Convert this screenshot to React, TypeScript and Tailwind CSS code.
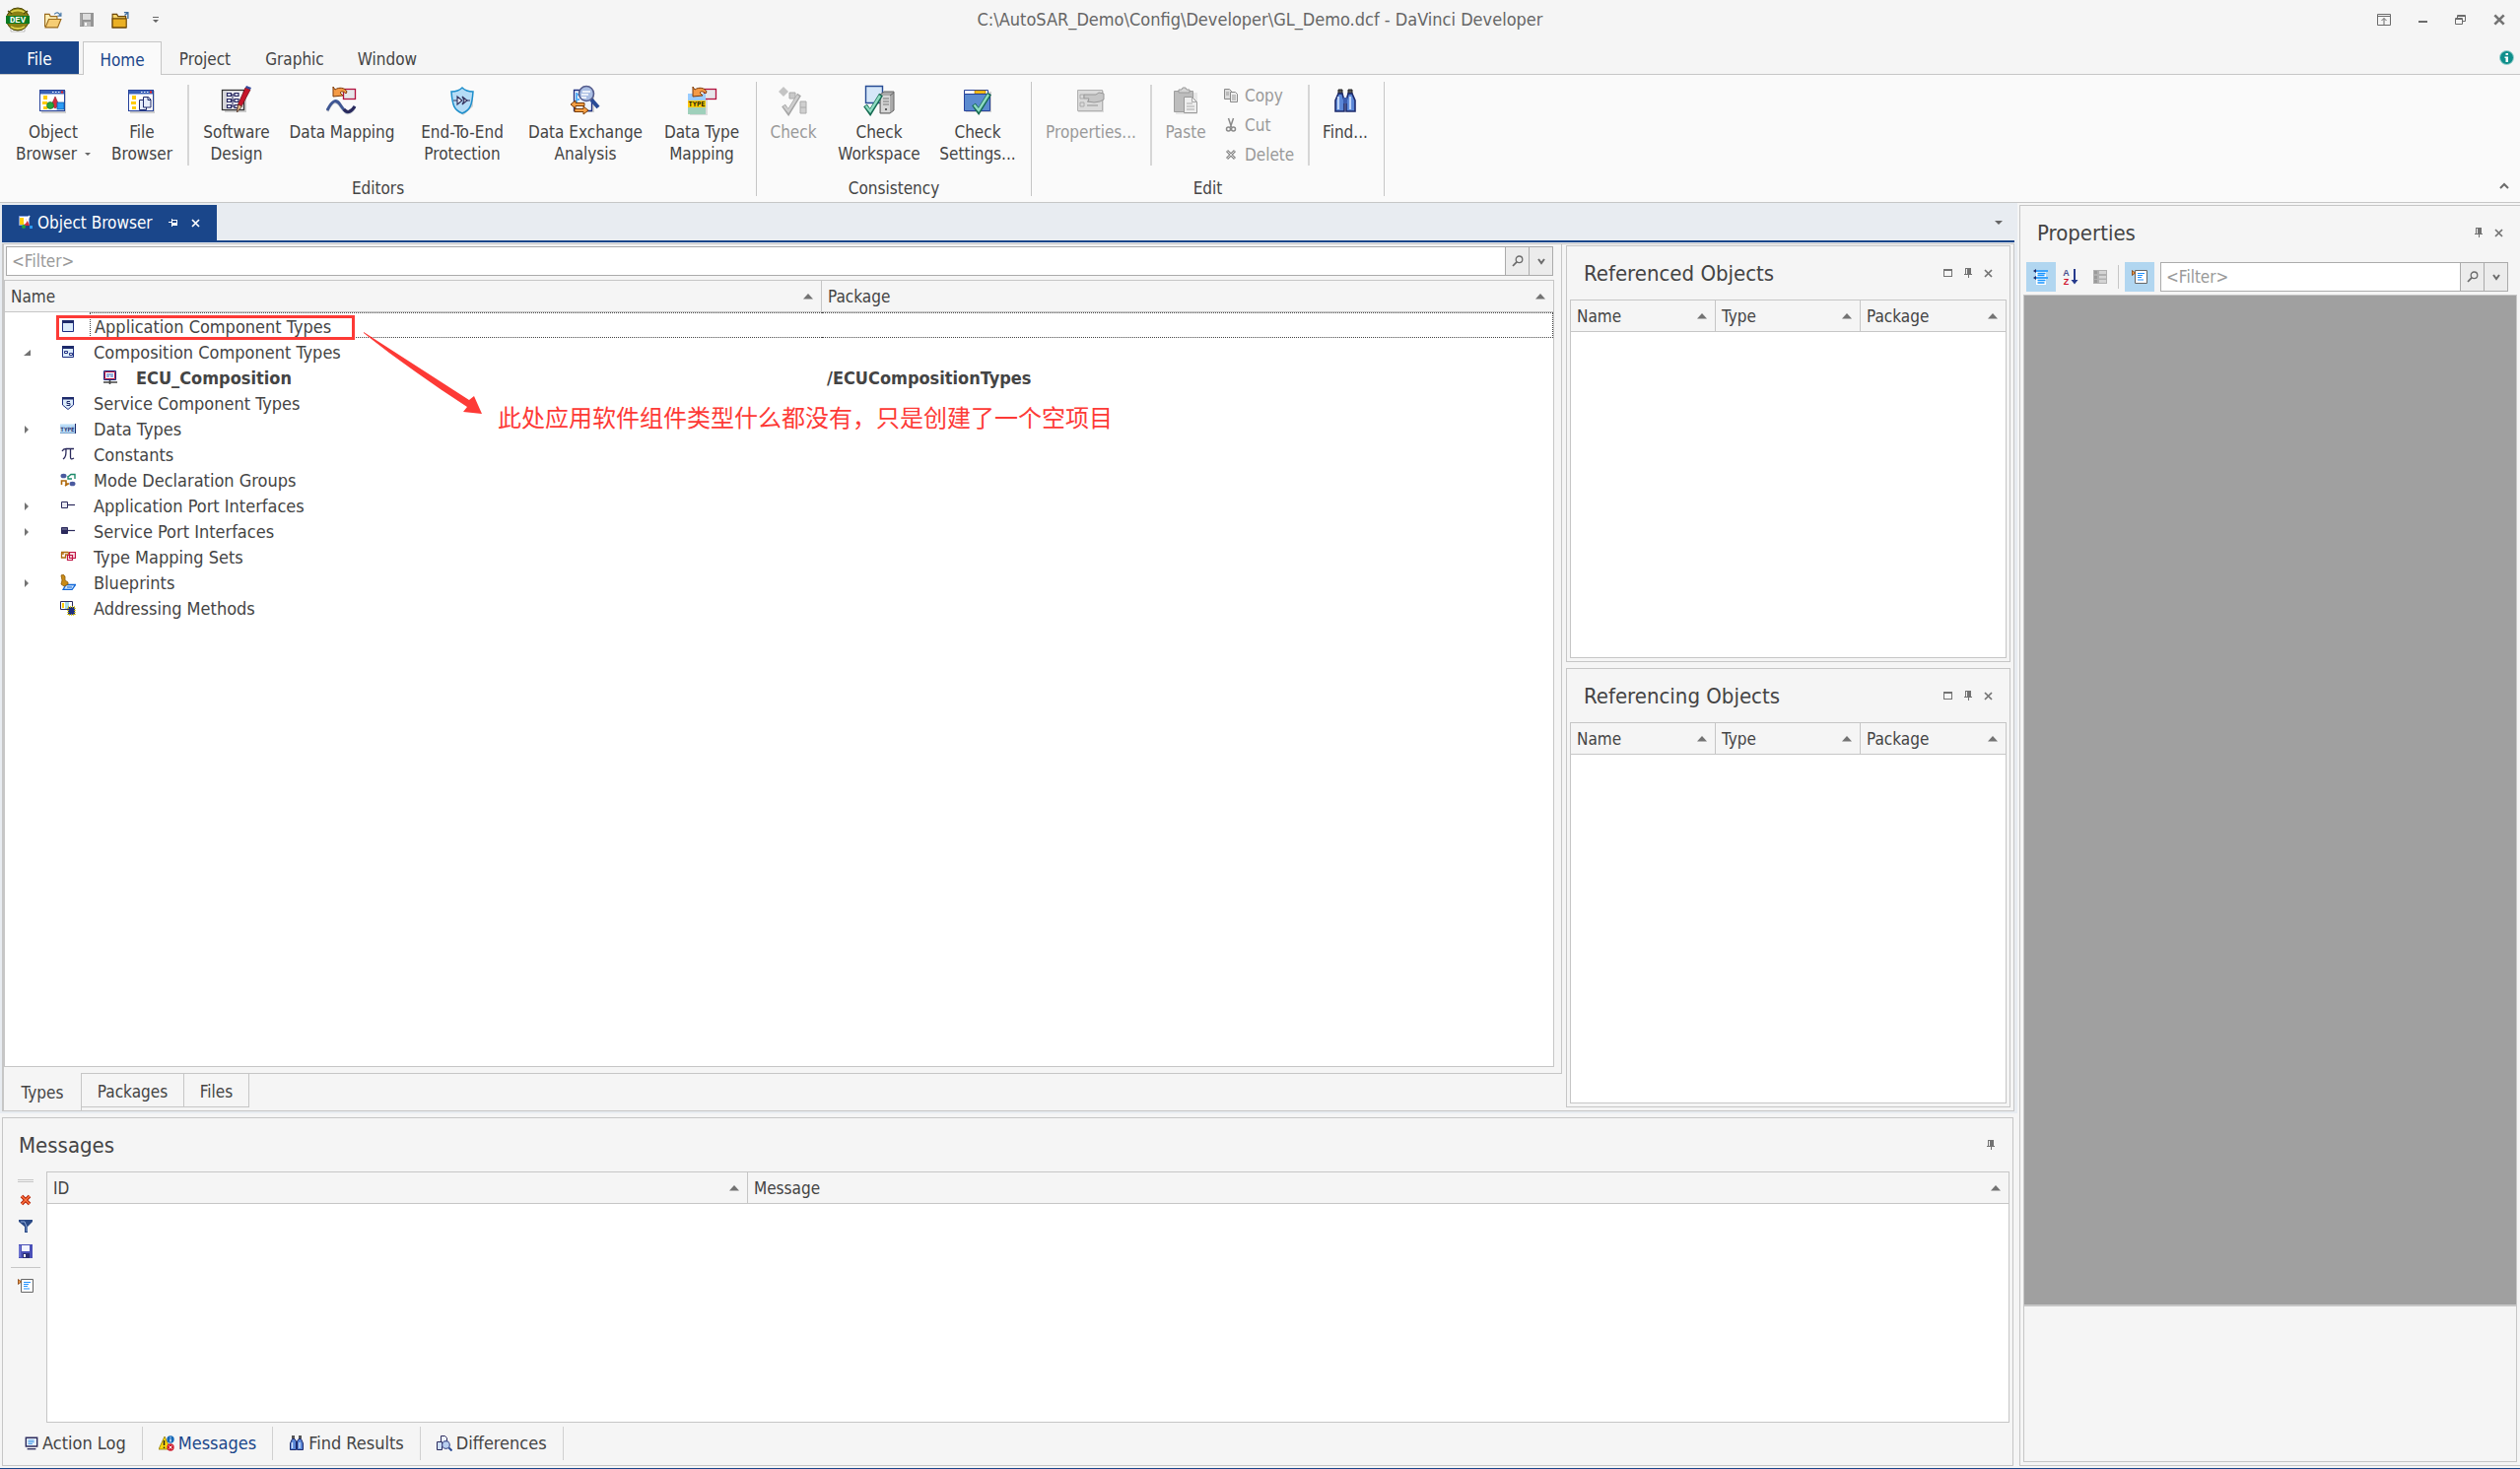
import { useState } from 'react';
import type { ReactNode } from 'react';
import clsx from 'clsx';

/* ---------- small glyphs ---------- */

function SortArrow() {
  return (
    <svg width="10" height="6" viewBox="0 0 10 6" className="shrink-0" aria-hidden="true">
      <path d="M5 0 10 5.5H0z" fill="#737373" />
    </svg>
  );
}

function CaretDown({ size = 8 }: { size?: number }) {
  return (
    <svg width={size} height={size / 2} viewBox="0 0 8 4" aria-hidden="true">
      <path d="M0 0h8L4 4z" fill="#666" />
    </svg>
  );
}

function PinIcon() {
  return (
    <svg width="8" height="10" viewBox="0 0 8 10" aria-hidden="true">
      <path d="M1 0h6v6h1v1H5v3H4V7H0V6h1zM2 1v5h1V1z" fill="#737373" fillRule="evenodd" />
    </svg>
  );
}

function CloseIcon({ color = '#737373', size = 9, weight = 1.7 }: { color?: string; size?: number; weight?: number }) {
  return (
    <svg width={size} height={size} viewBox="0 0 9 9" aria-hidden="true">
      <path d="M1 1l7 7M8 1L1 8" stroke={color} strokeWidth={weight} fill="none" />
    </svg>
  );
}

function MaximizeIcon() {
  return (
    <svg width="9" height="8" viewBox="0 0 9 8" aria-hidden="true">
      <path d="M0 0h9v8H0zM1 2v5h7V2z" fill="#737373" fillRule="evenodd" />
    </svg>
  );
}

function SearchIcon() {
  return (
    <svg width="12" height="12" viewBox="0 0 12 12" aria-hidden="true">
      <circle cx="7.5" cy="4.3" r="3.3" fill="none" stroke="#6b6b6b" strokeWidth="1.3" />
      <path d="M5 6.8L1 11" stroke="#6b6b6b" strokeWidth="1.8" />
    </svg>
  );
}

function ChevronIcon({ up = false }: { up?: boolean }) {
  return (
    <svg width="10" height="7" viewBox="0 0 10 7" aria-hidden="true">
      <path d={up ? 'M1 6l4-4 4 4' : 'M2 1l3 4 3-4'} fill="none" stroke="#6b6b6b" strokeWidth="2" />
    </svg>
  );
}

/* ---------- ribbon icons ---------- */

function Icon32({ children }: { children: ReactNode }) {
  return (
    <svg width="32" height="32" viewBox="0 0 32 32" className="shrink-0" aria-hidden="true">
      {children}
    </svg>
  );
}

function WindowFrame() {
  return (
    <>
      <rect x="4" y="6" width="25" height="23" fill="#999" opacity=".45" />
      <rect x="2.5" y="5.5" width="25" height="21" fill="#fff" stroke="#27429a" />
      <rect x="3" y="6" width="24" height="3.5" fill="#3b62b8" />
      <path d="M15 7.5h1.5M18 7.5h1.5M21 7.5h1.5" stroke="#fff" strokeWidth="1.2" />
      <path d="M24 7.5h2" stroke="#e22" strokeWidth="2" />
      <path d="M6 11h4v4H6zM5 17h5v3H5zM6 22h4v3H6z" fill="#fc0" />
    </>
  );
}

function ObjectBrowserIcon() {
  return (
    <Icon32>
      <WindowFrame />
      <path d="M18 12l4 9-4 3-4-3z" fill="#d22c3e" stroke="#8c1020" strokeWidth=".6" />
      <circle cx="13" cy="21" r="3.5" fill="#25a53a" stroke="#146324" strokeWidth=".6" />
      <rect x="20" y="18" width="7" height="7" fill="#2b9bf5" stroke="#0d5cab" strokeWidth=".8" />
    </Icon32>
  );
}

function FileBrowserIcon() {
  return (
    <Icon32>
      <WindowFrame />
      <path d="M13.5 15.5h5l2 2v8h-7z" fill="#e5ecfa" stroke="#1f2b6b" />
      <path d="M17.5 12.5h5l2.5 2.5v8h-7.5z" fill="#e5ecfa" stroke="#1f2b6b" />
      <path d="M22 12.5v3h3" fill="none" stroke="#1f2b6b" />
    </Icon32>
  );
}

function SoftwareDesignIcon() {
  return (
    <Icon32>
      <path d="M4 7h22v21H4z" fill="#999" opacity=".45" />
      <rect x="1.5" y="5.5" width="22" height="20" fill="#f3f3f6" stroke="#333" strokeWidth="1.3" />
      <rect x="3" y="7" width="4" height="17" fill="#d6d6da" />
      <path
        d="M6.5 8.5h4v3h-4zM6.5 14.5h4v3h-4zM6.5 20.5h4v3h-4zM14 8.5h4v3h-4zM14 14.5h4v3h-4zM14 20.5h4v3h-4z"
        fill="#dce0f5"
        stroke="#26265e"
        strokeWidth="1.2"
      />
      <path d="M10 10h4M10 16h4M10 22h4M12 10v12" stroke="#26265e" />
      <path d="M25 3l5 2-9 17-4 4 .5-6z" fill="#c7152b" stroke="#6e0d18" strokeWidth=".8" />
      <path d="M17.5 20l4 2-5 6z" fill="#e9c08c" stroke="#4b2f25" strokeWidth=".8" />
      <path d="M25 3l1-2 5 2-1 2z" fill="#35489b" />
    </Icon32>
  );
}

function OrangeArrow() {
  return (
    <path
      d="M7 2l2 3c4-3 10-2 12 2l-1 2c-2-2-4-3-6-1l3 3-10 1z"
      fill="#f49a45"
      stroke="#7c3b0a"
      strokeWidth="1"
    />
  );
}

function DataMappingIcon() {
  return (
    <Icon32>
      <rect x="17.5" y="4.5" width="12" height="10" fill="#e6e6ea" stroke="#b3123f" strokeWidth="1.3" />
      <OrangeArrow />
      <path d="M1 27C6 17 10 15 14 21s8 13 15 2" fill="none" stroke="#999" opacity=".4" strokeWidth="3" />
      <path d="M1 26C6 16 10 14 14 20s8 13 15 2" fill="none" stroke="#3f5793" strokeWidth="3" />
      <path d="M18 25c3 4 7 3 11-3" fill="none" stroke="#2b2a5c" strokeWidth="3" />
    </Icon32>
  );
}

function ShieldIcon() {
  return (
    <Icon32>
      <path d="M17 5l10 4v13l-10 9-10-9V9z" fill="#999" opacity=".4" />
      <path d="M16 3c3 3 6 4 11 4-1 14-3 19-11 22C8 26 6 21 5 7c5 0 8-1 11-4z" fill="#b5dcf6" stroke="#1d8ecb" strokeWidth="1.5" />
      <path d="M7 16h4M20 16h4" stroke="#30305c" />
      <path d="M11 12l5 4-5 4zM16 12l5 4-5 4 2-4z" fill="#e3e7f3" stroke="#30305c" strokeWidth="1.1" />
    </Icon32>
  );
}

function DataExchangeIcon() {
  return (
    <Icon32>
      <path d="M7 6h14l4 4v18H7z" fill="#999" opacity=".4" />
      <path d="M4.5 5.5h18v21h-18z" fill="#eef4fd" stroke="#1d2f82" strokeWidth="1.3" />
      <path d="M7 8v10M9 9v2M9 14v2" stroke="#2b9bf5" strokeWidth="1.5" />
      <path d="M22 15l7 8" stroke="#294b96" strokeWidth="4" />
      <circle cx="17" cy="9" r="7.5" fill="#a9bde3" stroke="#545c8c" strokeWidth="1.6" />
      <path d="M13 7h8M12 10h7M12 13h5" stroke="#fff" strokeWidth="1.3" />
      <path d="M1 20l5-4v2.5h9v3H6V24zM19 26l-5-4v2.5H5v3h9V30z" fill="#f6a046" stroke="#7a3c06" />
    </Icon32>
  );
}

function TypeMappingIcon() {
  return (
    <Icon32>
      <path d="M4 10h18v21H4z" fill="#999" opacity=".3" />
      <rect x="18.5" y="4.5" width="12" height="10" fill="#e6e6ea" stroke="#b3123f" strokeWidth="1.3" />
      <rect x="2" y="9" width="18" height="8" fill="#99ccff" />
      <rect x="2" y="16" width="18" height="7" fill="#fc0" />
      <rect x="2" y="23" width="18" height="7" fill="#9fd0bb" />
      <OrangeArrow />
      <text x="11" y="22" textAnchor="middle" fontSize="7" fontWeight="700" fontFamily="DejaVu Sans Mono" fill="#221f10">TYPE</text>
    </Icon32>
  );
}

function CheckMark({ color = '#156b52', light = '#8fdcc2' }: { color?: string; light?: string }) {
  return (
    <>
      <path d="M12 20l5 7L28 9" fill="none" stroke={color} strokeWidth="4.5" />
      <path d="M12.5 20.5L17 26l10-16" fill="none" stroke={light} strokeWidth="2.4" />
    </>
  );
}

function CheckIcon() {
  return (
    <Icon32>
      <path d="M6 2l5 5-5 5-5-5z" fill="#c4c4c4" />
      <path d="M12 8h6v6h-6z" fill="#c9c9c9" stroke="#aaa" />
      <path d="M23 17h6v12h-6zM23 23h6" fill="#cfcfcf" stroke="#aaa" />
      <g transform="translate(-6 1)">
        <CheckMark color="#a5a5a5" light="#cfcfcf" />
      </g>
    </Icon32>
  );
}

function CheckWorkspaceIcon() {
  return (
    <Icon32>
      <path d="M2.5 1.5h17v17h-17z" fill="#d5e6f8" stroke="#264b94" strokeWidth="1.4" />
      <path d="M17 10l4-3h10v19l-4 3H17z" fill="#aaa" stroke="#666" />
      <path d="M18 11h9v17h-9z" fill="#d6d6d6" />
      <path d="M27 11l4-3" stroke="#666" />
      <path d="M20 14h6M20 17h6M20 20h6" stroke="#777" />
      <circle cx="23" cy="25" r="1" fill="#333" />
      <g transform="translate(-10 1)">
        <CheckMark />
      </g>
    </Icon32>
  );
}

function CheckSettingsIcon() {
  return (
    <Icon32>
      <path d="M4 7h26v21H4z" fill="#999" opacity=".4" />
      <path d="M2.5 5.5h24v4h-24z" fill="#fff" stroke="#27429a" />
      <path d="M13 6h11v3H13z" fill="#fcc419" stroke="#9a6a00" strokeWidth=".6" />
      <path d="M2.5 9.5h26v17h-26z" fill="#5b8bcf" stroke="#27429a" />
      <CheckMark />
    </Icon32>
  );
}

function PropertiesIcon() {
  return (
    <Icon32>
      <path d="M3 6h26v22H3z" fill="#999" opacity=".3" />
      <path d="M2.5 5.5h25v21h-25z" fill="#dadada" stroke="#b0b0b0" />
      <path d="M5 10h4v4H5zM5 18h4v4H5z" fill="none" stroke="#aaa" />
      <path d="M12 17h11M12 21h11" stroke="#aaa" strokeWidth="1.5" />
      <path d="M9 10h12l3-2 5 1v6l-4 2-6 1-6-1 1-3H9z" fill="#c6c6c6" stroke="#999" />
    </Icon32>
  );
}

function PasteIcon() {
  return (
    <Icon32>
      <path d="M6 8h22v22H6z" fill="#999" opacity=".2" />
      <path d="M4.5 6.5h19v21h-19z" fill="#bdbdbd" stroke="#9d9d9d" />
      <path d="M9 8V5h3l1-2h3l1 2h3v3z" fill="#d5d5d5" stroke="#999" />
      <path d="M14.5 12.5h8l5 5v11h-13z" fill="#eee" stroke="#999" />
      <path d="M22.5 12.5v5h5M17 19h6M17 22h8M17 25h8" fill="none" stroke="#aaa" />
    </Icon32>
  );
}

function BinocularsIcon() {
  return (
    <Icon32>
      <path d="M9 5h4v4H9zM19 5h4v4h-4z" fill="#555" stroke="#222" />
      <path d="M9 9h4l2 7v11H6V16zM19 9h4l3 7v11h-9V16z" fill="#5a86d6" stroke="#1d2a6b" strokeWidth="1.6" />
      <path d="M14 13h4v6h-4z" fill="#3b5cae" />
      <path d="M9 12v13M21 12v13" stroke="#bcd3f7" strokeWidth="2.2" />
    </Icon32>
  );
}

function Icon16({ children, w = 16 }: { children: ReactNode; w?: number }) {
  return (
    <svg width={w} height={w} viewBox="0 0 16 16" className="shrink-0" aria-hidden="true">
      {children}
    </svg>
  );
}

/* ---------- 16px icons ---------- */

const CopyGlyph = (
  <Icon16>
    <path d="M1.5 1.5h5l2 2v8h-7z" fill="#ddd" stroke="#8a8a8a" />
    <path d="M7.5 4.5h5l2 2v8h-7z" fill="#eee" stroke="#8a8a8a" />
    <path d="M3 5h3M3 7h3M9 8h4M9 10h4M9 12h4" stroke="#999" />
  </Icon16>
);

const CutGlyph = (
  <Icon16>
    <path d="M5.5 1l3 9M10.5 1l-3 9" stroke="#8a8a8a" strokeWidth="1.5" />
    <circle cx="5.5" cy="12" r="2" fill="none" stroke="#8a8a8a" strokeWidth="1.5" />
    <circle cx="10.5" cy="12" r="2" fill="none" stroke="#8a8a8a" strokeWidth="1.5" />
  </Icon16>
);

const DeleteGlyph = (
  <Icon16>
    <path d="M4 4l8 8M12 4l-8 8" stroke="#8a8a8a" strokeWidth="3" />
    <path d="M4.5 4.5l7 7M11.5 4.5l-7 7" stroke="#ddd" />
  </Icon16>
);

const RedDeleteGlyph = (
  <Icon16>
    <path d="M4 4l8 8M12 4l-8 8" stroke="#b01c05" strokeWidth="3.6" />
    <path d="M4 4l8 8M12 4l-8 8" stroke="#ff7840" strokeWidth="1.5" />
  </Icon16>
);

const FilterGlyph = (
  <Icon16>
    <path d="M1 2h14v2l-5 5v6H7V9L1 4z" fill="#2b4a86" />
    <path d="M3 4h4l2 5v5" fill="none" stroke="#8eabdb" />
  </Icon16>
);

function SaveGlyph({ gray = false }: { gray?: boolean }) {
  return (
    <Icon16>
      <path d="M1 1h14v14H1z" fill={gray ? '#959595' : '#4a50b8'} />
      <path d="M4 2h8v6H4z" fill={gray ? '#dcdcdc' : '#f2f4ff'} />
      <path d="M5 10h7v5H5z" fill={gray ? '#bbb' : '#2a2e75'} />
      <path d="M6 11h2v3H6z" fill="#fff" />
      <path d="M2 2v12" stroke={gray ? '#bbb' : '#8f94e6'} />
    </Icon16>
  );
}

const ListPropsGlyph = (
  <Icon16>
    <path d="M3.5 1.5h12v13h-12z" fill="#fff" stroke="#666" />
    <path d="M6 4.5h7M6 6.5h5M6 8.5h4M6 11h6" stroke="#1e90ff" strokeWidth="1.2" />
    <path d="M.5 1.5v5L3.500 4z" fill="#f49a45" stroke="#7c3b0a" strokeWidth=".8" />
  </Icon16>
);

const CategoryGlyph = (
  <Icon16>
    <path d="M3 3h10v5H3zM3 10h10v6H3z" fill="#fff" />
    <path d="M2 2h13M4.5 4.5h8M4.5 6.5h7M2 9h13M4.5 11.5h8M4.5 14h7" stroke="#1694ff" strokeWidth="1.4" />
    <path d="M0 2l3-2v4zM0 9l3-2v4z" fill="#1d2a6b" />
  </Icon16>
);

const SortAzGlyph = (
  <Icon16>
    <text x="3.5" y="7" textAnchor="middle" fontSize="9" fontWeight="700" fontFamily="Liberation Sans" fill="#4a4f8f">A</text>
    <text x="3.5" y="15.5" textAnchor="middle" fontSize="9" fontWeight="700" fontFamily="Liberation Sans" fill="#d0122e">Z</text>
    <path d="M11 0h2v11h2.5L12 15.5 8.5 11H11z" fill="#263a8c" />
  </Icon16>
);

const GridGlyph = (
  <Icon16>
    <path d="M1 1h14v14H1z" fill="#b0b0b0" />
    <path d="M2 2h3v3H2zM2 7h3v3H2zM2 11h3v3H2z" fill="#9a9a9a" />
    <path d="M7 2h7v3H7zM7 7h7v2.5H7zM7 11h7v3H7z" fill="#d4d4d4" />
  </Icon16>
);

const AppTypesGlyph = (
  <Icon16>
    <path d="M2.5 2.5h11v11h-11z" fill="#dcecfb" stroke="#1d2f82" />
    <path d="M2 2h12v3H2z" fill="#1d2a6b" />
  </Icon16>
);

const CompositionTypesGlyph = (
  <Icon16>
    <path d="M2.5 2.5h11v11h-11z" fill="#dcecfb" stroke="#1d2f82" />
    <path d="M2 2h12v3H2z" fill="#1d2a6b" />
    <path d="M4.5 7.5h3v2h-3zM9.5 9.5h3v2h-3z" fill="#fff" stroke="#1d2f82" />
  </Icon16>
);

const EcuGlyph = (
  <Icon16>
    <path d="M1.5 1.5h12v9h-12z" fill="#fff" stroke="#1d2f82" />
    <path d="M2.5 2.5h10v7h-10z" fill="#fff" stroke="#b3123f" />
    <path d="M4 5h7M4 7h3M8 7h3" stroke="#2f5fc0" strokeWidth="1.2" />
    <path d="M1 13h14M7.5 11v4" stroke="#444" strokeWidth="1.6" />
  </Icon16>
);

const ServiceTypesGlyph = (
  <Icon16>
    <path d="M2.5 2.5h11V10L8 14.5 2.5 10z" fill="#dcecfb" stroke="#1d2f82" />
    <path d="M2 2h12v2.5H2z" fill="#1d2a6b" />
    <path d="M10 6.5H7v2h3v2H6.5" fill="none" stroke="#1d2a6b" />
  </Icon16>
);

const DataTypesGlyph = (
  <Icon16>
    <path d="M0 3.5h15.5v9H0z" fill="#b9dcf7" />
    <path d="M15.5 3v10" stroke="#1d2a6b" />
    <path d="M0 12.5h15" stroke="#7ba4cc" />
    <text x="7.5" y="10.5" textAnchor="middle" fontSize="6" fontWeight="700" fontFamily="DejaVu Sans Mono" fill="#1d2a6b">TYPE</text>
  </Icon16>
);

const ConstantsGlyph = (
  <Icon16>
    <path d="M2 5c1-2 2-2.5 4-2.5h8M6 3c0 5 0 8-3 10M10.5 3v8c0 2 1 2.5 3.5 1" fill="none" stroke="#2b2a5c" strokeWidth="1.3" />
  </Icon16>
);

const ModeGlyph = (
  <Icon16>
    <ellipse cx="3.5" cy="4" rx="3" ry="2.3" fill="#4a5a9f" />
    <ellipse cx="12.5" cy="12" rx="3" ry="2.3" fill="#4a5a9f" />
    <path d="M8 5l3-2.5h4V7M8 4v3h4" fill="none" stroke="#1d8a6a" strokeWidth="1.4" />
    <path d="M8 12l-3 2M1.5 13V9H6v3h3" fill="none" stroke="#b0690c" strokeWidth="1.6" />
  </Icon16>
);

function PortGlyph({ filled = false }: { filled?: boolean }) {
  return (
    <Icon16>
      <path d="M1.5 4.5h6v6h-6z" fill={filled ? '#2b2a5c' : '#e8e8f0'} stroke="#2b2a5c" />
      {filled && <path d="M2 6h5" stroke="#8d8db0" />}
      <path d="M8 7.5h7" stroke="#2b2a5c" strokeWidth="1.2" />
    </Icon16>
  );
}

const TypeMappingGlyph = (
  <Icon16>
    <path d="M1.5 4v5h4V6h3M1 3.5h7l1 2M3 6V4" fill="none" stroke="#b0690c" strokeWidth="1.3" />
    <path d="M9.5 3.5h6v6h-6z" fill="#f8dbe2" stroke="#c01545" strokeWidth="1.2" />
    <path d="M7.5 6.5h5v5h-5z" fill="none" stroke="#c01545" strokeWidth="1.2" />
  </Icon16>
);

const BlueprintGlyph = (
  <Icon16>
    <path d="M6 10.5h9.5L12 15.5H3z" fill="#cfe6ff" stroke="#1267d6" strokeWidth="1.3" />
    <path d="M7 13h5" stroke="#1267d6" />
    <path d="M1 1l2-1 2 2v4l3 2v2l-4 2-3-2 1-4z" fill="#c98b18" stroke="#8b5a0b" strokeWidth=".8" />
  </Icon16>
);

const AddressingGlyph = (
  <Icon16>
    <path d="M.5 1.5h12v8H.5z" fill="#fff" stroke="#2b2a5c" />
    <path d="M2 3h2v5H2z" fill="#fc0" />
    <path d="M5 2h4v7H5z" fill="#a8dbe9" />
    <path d="M8 7h7v8H8z" fill="#1d2f82" stroke="#d8c400" strokeWidth="1.6" strokeDasharray="1 1" />
  </Icon16>
);

const ActionLogGlyph = (
  <Icon16 w={14}>
    <path d="M1.5 1.5h13v10h-13z" fill="#e9f2fd" stroke="#2b2a5c" strokeWidth="1.6" />
    <path d="M4 4.5h7M4 6.5h7M4 8.5h5" stroke="#2b8be5" />
    <path d="M3 14.5h10" stroke="#2b2a5c" strokeWidth="1.5" />
  </Icon16>
);

const MessagesGlyph = (
  <Icon16>
    <path d="M6 1l6 13H0z" fill="#fbd90e" stroke="#8b7700" strokeWidth=".8" />
    <path d="M5.5 5v5M5.5 11.5v1.5" stroke="#222" strokeWidth="1.5" />
    <circle cx="12" cy="4" r="3.7" fill="#1267b8" />
    <path d="M12 3.5v3M12 1.5v1" stroke="#fff" strokeWidth="1.3" />
    <circle cx="12" cy="12" r="3.7" fill="#cf2233" />
    <path d="M10.5 10.5l3 3M13.5 10.5l-3 3" stroke="#fff" />
  </Icon16>
);

const FindGlyph = (
  <Icon16>
    <path d="M3 0h3v3H3zM10 0h3v3h-3z" fill="#555" />
    <path d="M3.5 3.5H6L7.5 6v8.5h-6V8zM10 3.5h2.5l2 4.5v6.5h-6V6z" fill="#5a86d6" stroke="#1d2a6b" />
    <path d="M3.5 7v6M11 7v6" stroke="#d3e2fa" strokeWidth="1.4" />
  </Icon16>
);

const DifferencesGlyph = (
  <Icon16>
    <path d="M4.5.5h4l2 2v7h-6z" fill="#eef4fd" stroke="#2b2a5c" />
    <path d="M.5 6.5h5v8h-5z" fill="#cfe0f7" stroke="#2b2a5c" />
    <path d="M12 12l3.5 3.5" stroke="#294b96" strokeWidth="2" />
    <circle cx="9.5" cy="9.5" r="3.8" fill="#b9cff0" stroke="#4a5590" strokeWidth="1.2" />
  </Icon16>
);

const ObjectBrowserTabGlyph = (
  <Icon16>
    <path d="M1.5 1.5h10v9h-10z" fill="#fff" stroke="#7f9be0" />
    <path d="M2 3h4v7H2z" fill="#fc0" />
    <path d="M9 4l3 7H6z" fill="#d22c3e" />
    <circle cx="6" cy="12" r="2" fill="#25a53a" />
    <path d="M12 11h3v3h-3z" fill="#2b9bf5" />
    <path d="M12 1L7 9" stroke="#fff" strokeWidth="1.5" />
  </Icon16>
);

function AppLogo() {
  return (
    <svg width="26" height="26" viewBox="0 0 26 26" role="img" aria-label="DEV">
      <path d="M6 19h14v6H6z" fill="#fff" stroke="#999" strokeWidth=".6" />
      <circle cx="13" cy="12.5" r="11.5" fill="#8a8014" stroke="#4e4808" />
      <path d="M5 6c5-3 11-3 16 0M6 20c5 3 9 3 14 0" stroke="#d9cc48" strokeWidth="2" fill="none" />
      <path d="M3 4l4 3M23 4l-4 3" stroke="#4e4808" strokeWidth="1.5" />
      <path d="M1 9h24v8H1z" fill="#0b7a1f" />
      <text x="13" y="16" textAnchor="middle" fontSize="9" fontWeight="700" fontFamily="Liberation Mono" fill="#fff">DEV</text>
    </svg>
  );
}

function OpenFolderIcon() {
  return (
    <Icon16 w={18}>
      <path d="M.5 14.5V3h4l1 2h6v3" fill="#fdeeb4" stroke="#9a6a1c" />
      <path d="M4 7.5h11L12 15H1z" fill="#f6cd74" stroke="#9a6a1c" />
      <path d="M9 3c2-2 4-2 5.5 1.5M15 1.5v3h-3" fill="none" stroke="#4a7aa8" strokeWidth="1.1" />
    </Icon16>
  );
}

function ClosedFolderIcon() {
  return (
    <Icon16 w={18}>
      <path d="M1 15V3h4l1 2h7v10z" fill="#f7d468" stroke="#6b4505" />
      <path d="M1 7h12.5v8H1z" fill="#eab024" stroke="#6b4505" />
      <path d="M15 7V1.5h-3.5M12 4l3-2.5" fill="none" stroke="#3f6ea0" strokeWidth="1.2" />
    </Icon16>
  );
}

/* ---------- ribbon ---------- */

interface RibbonButtonProps {
  icon: ReactNode;
  lines: string[];
  className: string;
  disabled?: boolean;
  caret?: boolean;
}

function RibbonButton({ icon, lines, className, disabled, caret }: RibbonButtonProps) {
  return (
    <button
      type="button"
      disabled={disabled}
      className={clsx('flex shrink-0 flex-col items-center gap-[5px] whitespace-nowrap leading-[22px] disabled:text-[#999]', className)}
    >
      {icon}
      <span className="flex flex-col items-center">
        {lines.map((line, i) => (
          <span key={line} className="flex items-center gap-2">
            {line}
            {caret && i === lines.length - 1 && <CaretDown size={6} />}
          </span>
        ))}
      </span>
    </button>
  );
}

function RibbonGroup({ label, children }: { label: string; children: ReactNode }) {
  return (
    <section className="mt-[7px] mb-1.5 flex flex-col border-r border-[#c6c6c6]" aria-label={label}>
      <div className="flex h-[100px] items-start pt-[3px]">{children}</div>
      <p className="text-center leading-4">{label}</p>
    </section>
  );
}

function RibbonDivider() {
  return <div className="mx-1 h-[82px] w-0.5 bg-[#d6d6d6]" />;
}

function SmallRibbonButton({ icon, label }: { icon: ReactNode; label: string }) {
  return (
    <button type="button" disabled className="flex h-[30px] items-center gap-1.5 text-[#999]">
      {icon}
      {label}
    </button>
  );
}

function Ribbon() {
  return (
    <div className="flex shrink-0 border-b border-[#c6c6c6] bg-[#fafafa]">
      <RibbonGroup label="Editors">
        <RibbonButton className="ml-1.5 w-24" icon={<ObjectBrowserIcon />} lines={['Object', 'Browser']} caret />
        <RibbonButton className="w-[84px]" icon={<FileBrowserIcon />} lines={['File', 'Browser']} />
        <RibbonDivider />
        <RibbonButton className="w-[88px]" icon={<SoftwareDesignIcon />} lines={['Software', 'Design']} />
        <RibbonButton className="w-[126px]" icon={<DataMappingIcon />} lines={['Data Mapping']} />
        <RibbonButton className="w-[118px]" icon={<ShieldIcon />} lines={['End-To-End', 'Protection']} />
        <RibbonButton className="w-[132px]" icon={<DataExchangeIcon />} lines={['Data Exchange', 'Analysis']} />
        <RibbonButton className="mr-[3px] w-[104px]" icon={<TypeMappingIcon />} lines={['Data Type', 'Mapping']} />
      </RibbonGroup>
      <RibbonGroup label="Consistency">
        <RibbonButton className="w-[74px]" icon={<CheckIcon />} lines={['Check']} disabled />
        <RibbonButton className="w-[100px]" icon={<CheckWorkspaceIcon />} lines={['Check', 'Workspace']} />
        <RibbonButton className="mr-1 w-[100px]" icon={<CheckSettingsIcon />} lines={['Check', 'Settings...']} />
      </RibbonGroup>
      <RibbonGroup label="Edit">
        <RibbonButton className="ml-1 w-[112px]" icon={<PropertiesIcon />} lines={['Properties...']} disabled />
        <RibbonDivider />
        <RibbonButton className="w-[60px]" icon={<PasteIcon />} lines={['Paste']} disabled />
        <div className="-mt-1 flex w-[90px] flex-col pl-2">
          <SmallRibbonButton icon={CopyGlyph} label="Copy" />
          <SmallRibbonButton icon={CutGlyph} label="Cut" />
          <SmallRibbonButton icon={DeleteGlyph} label="Delete" />
        </div>
        <RibbonDivider />
        <RibbonButton className="mr-[7px] w-16" icon={<BinocularsIcon />} lines={['Find...']} />
      </RibbonGroup>
      <button type="button" className="mr-[11px] mb-[13px] ml-auto self-end" aria-label="Collapse ribbon">
        <ChevronIcon up />
      </button>
    </div>
  );
}

/* ---------- shared panel pieces ---------- */

function PanelTitle({ title, children, className }: { title: string; children: ReactNode; className?: string }) {
  return (
    <header className={clsx('flex h-[54px] shrink-0 items-center justify-between', className)}>
      <h2 className="pt-0.5 text-[22px] leading-7">{title}</h2>
      <div className="flex items-center gap-3">{children}</div>
    </header>
  );
}

function GlyphButton({ label, children }: { label: string; children: ReactNode }) {
  return (
    <button type="button" aria-label={label} className="flex items-center justify-center">
      {children}
    </button>
  );
}

function FilterBox({ label, className }: { label: string; className?: string }) {
  const [value, setValue] = useState('');
  return (
    <div className={clsx('flex h-[30px] border border-[#ababab] bg-white', className)}>
      <input
        aria-label={label}
        value={value}
        onChange={(e) => setValue(e.target.value)}
        placeholder="<Filter>"
        className="min-w-0 flex-1 px-[5px] outline-none placeholder:text-[#999]"
      />
      <button type="button" aria-label="Search" className="flex w-6 items-center justify-center border-l border-[#ababab] bg-[#ececec]">
        <SearchIcon />
      </button>
      <button type="button" aria-label="Filter history" className="flex w-6 items-center justify-center border-l border-[#ababab] bg-[#ececec]">
        <ChevronIcon />
      </button>
    </div>
  );
}

function HeaderCell({ label }: { label: string }) {
  return (
    <th className="h-8 border-r border-b border-[#c6c6c6] bg-[#f5f5f5] p-0 pr-2 pl-1.5 text-left font-normal last:border-r-0">
      <div className="flex items-center justify-between">
        {label}
        <SortArrow />
      </div>
    </th>
  );
}

function ReferencePanel({ title, className }: { title: string; className: string }) {
  return (
    <section className={clsx('flex flex-col border border-[#c6c6c6] px-[3px] pb-[3px]', className)}>
      <PanelTitle title={title} className="pr-3.5 pl-3.5">
        <GlyphButton label="Maximize"><MaximizeIcon /></GlyphButton>
        <GlyphButton label="Auto hide"><PinIcon /></GlyphButton>
        <GlyphButton label="Close"><CloseIcon /></GlyphButton>
      </PanelTitle>
      <div className="flex-1 border border-[#c6c6c6] bg-white">
        <table className="w-full table-fixed border-separate border-spacing-0">
          <thead>
            <tr>
              <HeaderCell label="Name" />
              <HeaderCell label="Type" />
              <HeaderCell label="Package" />
            </tr>
          </thead>
        </table>
      </div>
    </section>
  );
}

/* ---------- object browser ---------- */

interface TreeRow {
  name: string;
  icon: ReactNode;
  state?: 'open' | 'closed';
  pkg?: string;
  nested?: boolean;
}

const rows: TreeRow[] = [
  { name: 'Application Component Types', icon: AppTypesGlyph },
  { name: 'Composition Component Types', icon: CompositionTypesGlyph, state: 'open' },
  { name: 'ECU_Composition', icon: EcuGlyph, nested: true, pkg: '/ECUCompositionTypes' },
  { name: 'Service Component Types', icon: ServiceTypesGlyph },
  { name: 'Data Types', icon: DataTypesGlyph, state: 'closed' },
  { name: 'Constants', icon: ConstantsGlyph },
  { name: 'Mode Declaration Groups', icon: ModeGlyph },
  { name: 'Application Port Interfaces', icon: <PortGlyph />, state: 'closed' },
  { name: 'Service Port Interfaces', icon: <PortGlyph filled />, state: 'closed' },
  { name: 'Type Mapping Sets', icon: TypeMappingGlyph },
  { name: 'Blueprints', icon: BlueprintGlyph, state: 'closed' },
  { name: 'Addressing Methods', icon: AddressingGlyph },
];

function Expander({ state, name }: { state?: 'open' | 'closed'; name: string }) {
  if (!state) return <span className="w-12" />;
  return (
    <button type="button" aria-label={`Toggle ${name}`} className="flex w-12 items-center justify-center pt-1 pr-1">
      <svg width="8" height="8" viewBox="0 0 8 8" aria-hidden="true">
        <path d={state === 'open' ? 'M8 1v6H1z' : 'M2 0l4 4-4 4z'} fill="#737373" />
      </svg>
    </button>
  );
}

function Annotation() {
  return (
    <div className="pointer-events-none absolute top-8 left-0 text-[#fd3a36]">
      <div className="absolute top-[3px] left-[52px] h-[25px] w-[303px] border-[3px] border-[#fd3a36]" />
      <svg width="130" height="90" viewBox="0 0 130 90" className="absolute top-5 left-[360px]" aria-hidden="true">
        <path d="M4 0L111 69l5-4 8 18-19-2 4-5C74 53 38 28 4 1z" fill="#fd3a36" />
      </svg>
      <p className="absolute top-[88px] left-[500px] text-[24px] leading-9 whitespace-nowrap font-['Noto_Sans_CJK_SC',sans-serif]">
        此处应用软件组件类型什么都没有，只是创建了一个空项目
      </p>
    </div>
  );
}

function ObjectTree() {
  return (
    <div className="relative flex-1 border border-[#c6c6c6] bg-white">
      <table className="w-full table-fixed border-separate border-spacing-0">
        <colgroup>
          <col className="w-[829px]" />
          <col />
        </colgroup>
        <thead>
          <tr>
            <HeaderCell label="Name" />
            <HeaderCell label="Package" />
          </tr>
        </thead>
        <tbody className="text-[18px]">
          {rows.map((row, i) => (
            <tr key={row.name} className={row.nested ? 'font-bold' : ''}>
              <td className="h-[26px] p-0">
                <div className="flex h-[26px]">
                  <Expander state={row.state} name={row.name} />
                  <span className={clsx('flex items-center pt-0.5', row.nested ? 'w-[81px] pl-[51px]' : 'w-[38px] pl-2')}>
                    {row.icon}
                  </span>
                  <span
                    className={clsx(
                      'flex flex-1 items-center border-y pt-1 pl-1 leading-5',
                      i === 0 ? 'border-l border-dotted border-[#444]' : 'border-transparent',
                    )}
                  >
                    {row.name}
                  </span>
                </div>
              </td>
              <td className={clsx('border-y p-0 pt-1 pl-[5px] leading-5', i === 0 ? 'border-r border-dotted border-[#444]' : 'border-transparent')}>
                {row.pkg}
              </td>
            </tr>
          ))}
        </tbody>
      </table>
      <Annotation />
    </div>
  );
}

function ObjectBrowser() {
  return (
    <main className="flex min-h-0 flex-1 flex-col bg-[#e8ecf1] pb-0.5 pl-0.5">
      <div className="mr-[3px] flex h-10 shrink-0 items-end border-b-2 border-[#1a468a]">
        <button type="button" className="flex h-9 items-center gap-1 bg-[#1a468a] pr-[17px] pl-4 text-white" role="tab" aria-selected="true">
          {ObjectBrowserTabGlyph}
          Object Browser
          <span className="ml-3">
            <svg width="9" height="8" viewBox="0 0 9 8" aria-hidden="true">
              <path d="M0 3h3V0h1v1h5v6H4v1H3V4H0zM4 2v2h4V2z" fill="#fff" fillRule="evenodd" />
            </svg>
          </span>
          <span className="ml-2.5"><CloseIcon color="#fff" size={9} /></span>
        </button>
        <button type="button" aria-label="Window list" className="mr-3 mb-4 ml-auto">
          <CaretDown />
        </button>
      </div>
      <div className="mt-px mr-[3px] flex min-h-0 flex-1 gap-1 border border-[#c6c6c6] bg-[#f5f5f5]">
        <div className="flex min-w-0 flex-1 flex-col border-l border-[#c6c6c6]">
          <div className="flex min-h-0 flex-1 flex-col border-r border-b border-[#c6c6c6] pt-0.5 pr-[7px] pb-1.5">
            <FilterBox label="Filter objects" className="mr-px mb-1 ml-0.5 shrink-0" />
            <ObjectTree />
          </div>
          <div className="flex shrink-0 items-start" role="tablist">
            <button type="button" role="tab" className="-mt-px h-[38px] w-[79px] border-r border-[#c6c6c6] bg-[#f5f5f5] pt-0.5">Types</button>
            <button type="button" role="tab" className="-mt-px h-[35px] w-[104px] border-y border-r border-[#c6c6c6] pt-0.5">Packages</button>
            <button type="button" role="tab" className="-mt-px h-[35px] w-[66px] border-y border-r border-[#c6c6c6] pt-0.5">Files</button>
          </div>
        </div>
        <div className="flex w-[454px] shrink-0 flex-col gap-1.5 pt-px pr-[3px] pb-[3px]">
          <ReferencePanel title="Referenced Objects" className="flex-[19]" />
          <ReferencePanel title="Referencing Objects" className="flex-[20]" />
        </div>
      </div>
    </main>
  );
}

/* ---------- messages ---------- */

const bottomTabs = [
  { label: 'Action Log', icon: ActionLogGlyph },
  { label: 'Messages', icon: MessagesGlyph },
  { label: 'Find Results', icon: FindGlyph },
  { label: 'Differences', icon: DifferencesGlyph },
];

function Messages() {
  const [active, setActive] = useState('Messages');
  return (
    <section className="mt-1 mr-1 mb-0.5 ml-0.5 flex h-[354px] shrink-0 flex-col border border-[#c6c6c6]">
      <PanelTitle title="Messages" className="pr-[18px] pl-4">
        <GlyphButton label="Auto hide"><PinIcon /></GlyphButton>
      </PanelTitle>
      <div className="flex min-h-0 flex-1 pr-[3px]">
        <div className="flex w-11 flex-col items-center pt-2 pl-px" role="toolbar" aria-label="Message tools">
          <div className="h-[3px] w-4 border-y border-[#c6c6c6]" />
          <div className="mt-[10px] flex flex-col gap-[10px]">
            <GlyphButton label="Delete message">{RedDeleteGlyph}</GlyphButton>
            <GlyphButton label="Filter messages">{FilterGlyph}</GlyphButton>
            <GlyphButton label="Save messages"><SaveGlyph /></GlyphButton>
          </div>
          <div className="mt-2 mb-[10px] h-px w-[30px] bg-[#c6c6c6]" />
          <GlyphButton label="Message properties">{ListPropsGlyph}</GlyphButton>
        </div>
        <div className="flex-1 border border-[#c6c6c6] bg-white">
          <table className="w-full table-fixed border-separate border-spacing-0">
            <colgroup>
              <col className="w-[711px]" />
              <col />
            </colgroup>
            <thead>
              <tr>
                <HeaderCell label="ID" />
                <HeaderCell label="Message" />
              </tr>
            </thead>
          </table>
        </div>
      </div>
      <nav className="flex shrink-0 gap-4 pt-1 pb-[5px] pl-[22px] text-[18px]">
        {bottomTabs.map((tab) => (
          <button
            key={tab.label}
            type="button"
            onClick={() => setActive(tab.label)}
            className={clsx(
              'flex h-[34px] items-center gap-1 border-r border-[#d0d0d0] pr-4 whitespace-nowrap',
              tab.label === active && 'text-[#1a468a]',
            )}
          >
            {tab.icon}
            {tab.label}
          </button>
        ))}
      </nav>
    </section>
  );
}

/* ---------- properties ---------- */

function Properties() {
  return (
    <aside className="mt-0.5 mb-0.5 ml-0.5 flex w-[508px] shrink-0 flex-col border border-r-0 border-[#c6c6c6] px-[3px] pb-[3px]">
      <PanelTitle title="Properties" className="pr-3.5 pl-3.5">
        <GlyphButton label="Auto hide"><PinIcon /></GlyphButton>
        <GlyphButton label="Close"><CloseIcon /></GlyphButton>
      </PanelTitle>
      <div className="mt-[3px] mb-[3px] flex shrink-0 items-center pr-[9px] pl-[3px]">
        <button type="button" aria-label="Categorized" className="flex h-[30px] w-[30px] items-center justify-center bg-[#b1d6f0]">{CategoryGlyph}</button>
        <button type="button" aria-label="Alphabetical" className="flex h-[30px] w-[30px] items-center justify-center">{SortAzGlyph}</button>
        <button type="button" aria-label="Property pages" disabled className="flex h-[30px] w-[30px] items-center justify-center">{GridGlyph}</button>
        <div className="mr-1.5 ml-[3px] h-6 w-px bg-[#c6c6c6]" />
        <button type="button" aria-label="Show description" className="flex h-[30px] w-[30px] items-center justify-center bg-[#b1d6f0]">{ListPropsGlyph}</button>
        <FilterBox label="Filter properties" className="ml-1.5 flex-1" />
      </div>
      <div className="flex-1 border border-[#c6c6c6] bg-[#a0a0a0]" />
      <div className="h-[159px] shrink-0 border border-[#c6c6c6]" />
    </aside>
  );
}

/* ---------- window chrome ---------- */

function TitleBar() {
  return (
    <header className="grid h-[42px] shrink-0 grid-cols-[1fr_auto_1fr] items-center pb-[3px]">
      <div className="flex items-center pl-[5px]">
        <AppLogo />
        <div className="ml-[14px] flex items-center gap-[17px]">
          <GlyphButton label="Open"><OpenFolderIcon /></GlyphButton>
          <GlyphButton label="Save"><SaveGlyph gray /></GlyphButton>
          <GlyphButton label="Open workspace"><ClosedFolderIcon /></GlyphButton>
        </div>
        <button type="button" aria-label="Customize quick access" className="ml-6">
          <svg width="6" height="6" viewBox="0 0 6 6" aria-hidden="true">
            <path d="M0 0h6v1H0zM0 3h6L3 6z" fill="#666" />
          </svg>
        </button>
      </div>
      <h1 className="text-[18px] text-[#666]">C:\AutoSAR_Demo\Config\Developer\GL_Demo.dcf - DaVinci Developer</h1>
      <div className="flex items-center justify-end gap-7 pr-[15px]">
        <GlyphButton label="Ribbon display options">
          <svg width="14" height="12" viewBox="0 0 14 12"><path d="M.5.5h13v11H.5zM0 2.5h14M7 11V4.5M4.5 7L7 4.5 9.5 7" fill="none" stroke="#6b6b6b" /></svg>
        </GlyphButton>
        <GlyphButton label="Minimize">
          <svg width="9" height="10" viewBox="0 0 9 10"><path d="M0 6h9v2H0z" fill="#6b6b6b" /></svg>
        </GlyphButton>
        <GlyphButton label="Restore">
          <svg width="11" height="10" viewBox="0 0 11 10"><path d="M.5 3.5h7v6h-7zM0 4.5h8M2.5 3V.5h8v6H8M2 1.5h9" fill="none" stroke="#6b6b6b" /></svg>
        </GlyphButton>
        <GlyphButton label="Close window"><CloseIcon size={12} weight={2} /></GlyphButton>
      </div>
    </header>
  );
}

function RibbonTabs() {
  return (
    <nav className="flex h-[34px] shrink-0 items-stretch border-b border-[#c6c6c6]">
      <button type="button" className="mr-1 w-20 bg-[#1a468a] pt-0.5 text-white">File</button>
      <button type="button" className="-mb-px w-20 border border-b-0 border-[#c6c6c6] bg-[#fafafa] pt-0.5 text-[#1a468a]">Home</button>
      <button type="button" className="w-[88px] pt-[3px]">Project</button>
      <button type="button" className="w-[94px] pt-[3px]">Graphic</button>
      <button type="button" className="w-[94px] pt-[3px]">Window</button>
      <button type="button" aria-label="About" className="mr-1.5 ml-auto">
        <svg width="15" height="15" viewBox="0 0 15 15" aria-hidden="true">
          <circle cx="7.5" cy="7.5" r="7" fill="#0f8f8b" stroke="#9cd3d0" />
          <path d="M6.5 3H9v2H6.5zM5.5 6.5H9V12H6.5V8h-1z" fill="#fff" />
        </svg>
      </button>
    </nav>
  );
}

export default function App() {
  return (
    <div className="flex h-screen min-h-[800px] flex-col overflow-hidden border-b border-[#1a468a] bg-[#f5f5f5] text-[17px] leading-6 text-[#444] font-['DejaVu_Sans_Condensed','Noto_Sans',sans-serif]">
      <TitleBar />
      <RibbonTabs />
      <Ribbon />
      <div className="flex min-h-0 flex-1">
        <div className="flex min-w-0 flex-1 flex-col">
          <ObjectBrowser />
          <Messages />
        </div>
        <Properties />
      </div>
    </div>
  );
}
